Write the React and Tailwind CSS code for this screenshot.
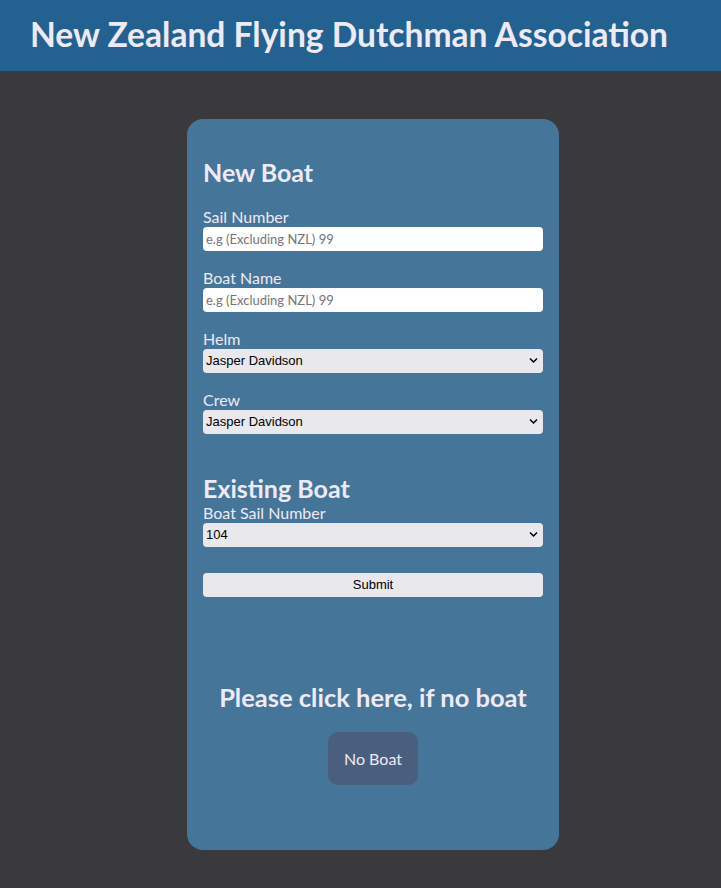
export default function App() {
  return (
    <div className="min-h-[888px] bg-[#3a393e] font-['Lato','Open_Sans',sans-serif] text-[#eeeaf5]">
      <header className="h-[71px] bg-[#236190] flex items-center px-[30px]">
        <h1 className="text-[33.6px] font-bold leading-none -mt-[2px]">New Zealand Flying Dutchman Association</h1>
      </header>

      <div className="pt-[48px] pl-[187px]">
        <div className="w-[372px] h-[731px] rounded-[16px] bg-[#457599] px-[16px] pt-[39px]">
          <h2 className="text-[25px] font-bold leading-[28px]">New Boat</h2>

          <div className="mt-[21px]">
            <label className="block text-[16px] leading-[20px]">Sail Number</label>
            <input
              className="block w-full h-[24px] rounded-[4px] bg-white px-[3px] text-[13px] text-black placeholder:text-[#757575] outline-none"
              placeholder="e.g (Excluding NZL) 99"
            />
          </div>

          <div className="mt-[17px]">
            <label className="block text-[16px] leading-[20px]">Boat Name</label>
            <input
              className="block w-full h-[24px] rounded-[4px] bg-white px-[3px] text-[13px] text-black placeholder:text-[#757575] outline-none"
              placeholder="e.g (Excluding NZL) 99"
            />
          </div>

          <div className="mt-[17px]">
            <label className="block text-[16px] leading-[20px]">Helm</label>
            <Select value="Jasper Davidson" />
          </div>

          <div className="mt-[17px]">
            <label className="block text-[16px] leading-[20px]">Crew</label>
            <Select value="Jasper Davidson" />
          </div>

          <h2 className="mt-[40px] text-[25px] font-bold leading-[29px]">Existing Boat</h2>
          <label className="block text-[16px] leading-[20px]">Boat Sail Number</label>
          <Select value="104" />

          <button className="mt-[26px] block w-full h-[24px] rounded-[4px] bg-[#e9e8ed] text-[13px] text-black font-['Liberation_Sans',sans-serif]">
            Submit
          </button>

          <h3 className="mt-[85px] text-center text-[25.5px] font-bold leading-[30px]">Please click here, if no boat</h3>

          <div className="flex justify-center mt-[20px]">
            <button className="w-[90px] h-[53px] rounded-[10px] bg-[#4a5f7d] text-[16px] text-[#eeeaf5]">No Boat</button>
          </div>
        </div>
      </div>
    </div>
  )
}

function Select({ value }) {
  return (
    <div className="relative h-[24px] rounded-[4px] bg-[#e9e8ed] text-black flex items-center px-[3px]">
      <span className="text-[13px] font-['Liberation_Sans',sans-serif]">{value}</span>
      <svg className="absolute right-[5px] top-[8px]" width="9" height="7" viewBox="0 0 9 7" fill="none">
        <path d="M1 1.5 L4.5 5 L8 1.5" stroke="#000" strokeWidth="1.5" />
      </svg>
    </div>
  )
}
